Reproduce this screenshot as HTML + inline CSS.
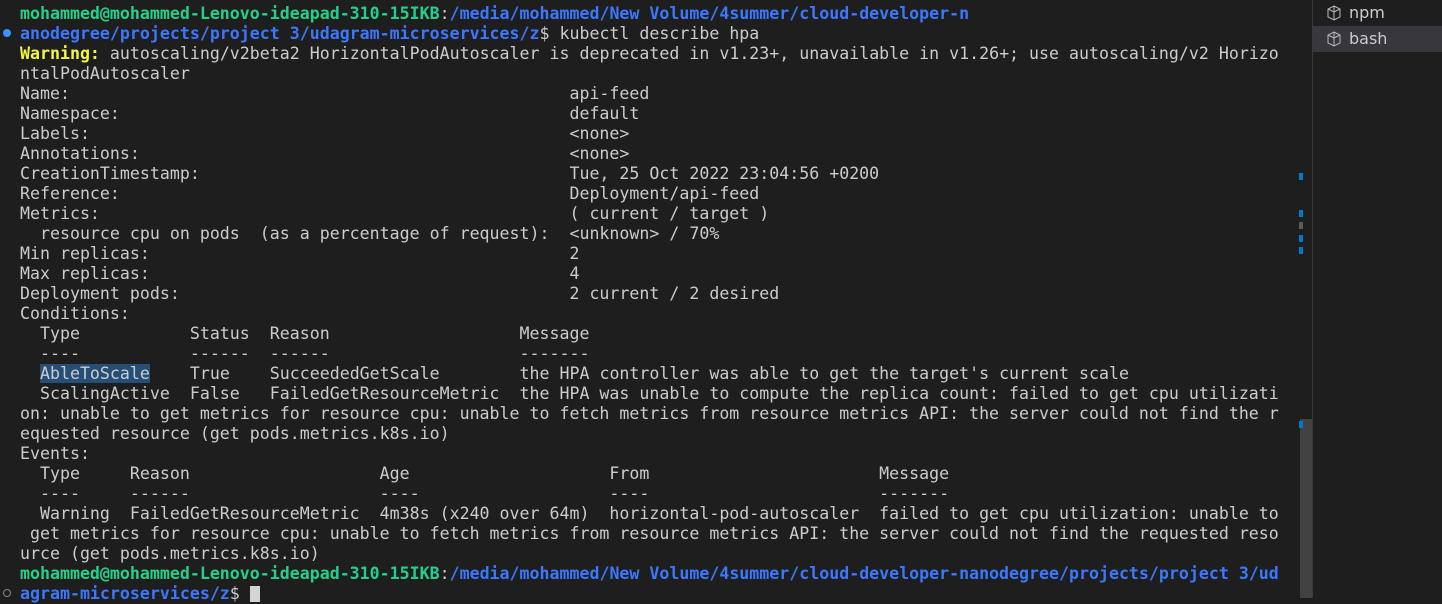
<!DOCTYPE html>
<html><head><meta charset="utf-8"><style>
html,body{margin:0;padding:0;background:#1e1e1e;width:1442px;height:598px;overflow:hidden}
#t{position:absolute;left:20px;top:4px;font-family:"DejaVu Sans Mono","Liberation Mono",monospace;font-size:16.6px;line-height:20px;color:#cccccc;white-space:pre}
.g{color:#23d18b;font-weight:bold}
.b{color:#3b78ff;font-weight:bold}
.y{color:#f5f543;font-weight:bold}
.sel{background:#264f78}
.cur{display:inline-block;width:10px;height:16px;background:#d4d4d4;vertical-align:-3px}
#side{position:absolute;left:1312px;top:0;width:130px;height:598px;background:#1e1e1e;border-left:1px solid #3a3a3a}
.row{height:26px;line-height:26px;font-family:"DejaVu Sans","Liberation Sans",sans-serif;font-size:16px;color:#cccccc;padding-left:36px;position:relative}
.row.act{background:#37373d}
.row svg{position:absolute;left:13px;top:5px}
.mk{position:absolute;left:1299px;width:4px;height:7px;background:#007acc}
</style></head><body>
<div id="t"><span class="g">mohammed@mohammed-Lenovo-ideapad-310-15IKB</span>:<span class="b">/media/mohammed/New Volume/4summer/cloud-developer-n</span>
<span class="b">anodegree/projects/project 3/udagram-microservices/z</span>$ kubectl describe hpa
<span class="y">Warning:</span> autoscaling/v2beta2 HorizontalPodAutoscaler is deprecated in v1.23+, unavailable in v1.26+; use autoscaling/v2 Horizo
ntalPodAutoscaler
Name:                                                  api-feed
Namespace:                                             default
Labels:                                                &lt;none&gt;
Annotations:                                           &lt;none&gt;
CreationTimestamp:                                     Tue, 25 Oct 2022 23:04:56 +0200
Reference:                                             Deployment/api-feed
Metrics:                                               ( current / target )
  resource cpu on pods  (as a percentage of request):  &lt;unknown&gt; / 70%
Min replicas:                                          2
Max replicas:                                          4
Deployment pods:                                       2 current / 2 desired
Conditions:
  Type           Status  Reason                   Message
  ----           ------  ------                   -------
  <span class="sel">AbleToScale</span>    True    SucceededGetScale        the HPA controller was able to get the target's current scale
  ScalingActive  False   FailedGetResourceMetric  the HPA was unable to compute the replica count: failed to get cpu utilizati
on: unable to get metrics for resource cpu: unable to fetch metrics from resource metrics API: the server could not find the r
equested resource (get pods.metrics.k8s.io)
Events:
  Type     Reason                   Age                    From                       Message
  ----     ------                   ----                   ----                       -------
  Warning  FailedGetResourceMetric  4m38s (x240 over 64m)  horizontal-pod-autoscaler  failed to get cpu utilization: unable to
 get metrics for resource cpu: unable to fetch metrics from resource metrics API: the server could not find the requested reso
urce (get pods.metrics.k8s.io)
<span class="g">mohammed@mohammed-Lenovo-ideapad-310-15IKB</span>:<span class="b">/media/mohammed/New Volume/4summer/cloud-developer-nanodegree/projects/project 3/ud</span>
<span class="b">agram-microservices/z</span>$ <span class="cur"></span></div>
<div style="position:absolute;left:3px;top:29px;width:8px;height:8px;border-radius:50%;background:#3794ff"></div>
<div style="position:absolute;left:3px;top:589px;width:6px;height:6px;border-radius:50%;border:1px solid #888"></div>
<div class="mk" style="top:173px"></div>
<div class="mk" style="top:210px"></div>
<div class="mk" style="top:222px;background:#5a5a5a"></div>
<div class="mk" style="top:235px"></div>
<div class="mk" style="top:247px"></div>
<div style="position:absolute;left:1300px;top:419px;width:12px;height:179px;background:#424242"></div>
<div class="mk" style="top:421px"></div>
<div id="side">
<div class="row"><svg width="16" height="16" viewBox="0 0 16 16"><path d="M8 1 L14 4 L14 12 L8 15 L2 12 L2 4 Z M8 1 L8 15 M2 4 L8 7 L14 4" fill="none" stroke="#bbb" stroke-width="1"/></svg>npm</div>
<div class="row act"><svg width="16" height="16" viewBox="0 0 16 16"><path d="M8 1 L14 4 L14 12 L8 15 L2 12 L2 4 Z M8 1 L8 15 M2 4 L8 7 L14 4" fill="none" stroke="#bbb" stroke-width="1"/></svg>bash</div>
</div>
</body></html>
